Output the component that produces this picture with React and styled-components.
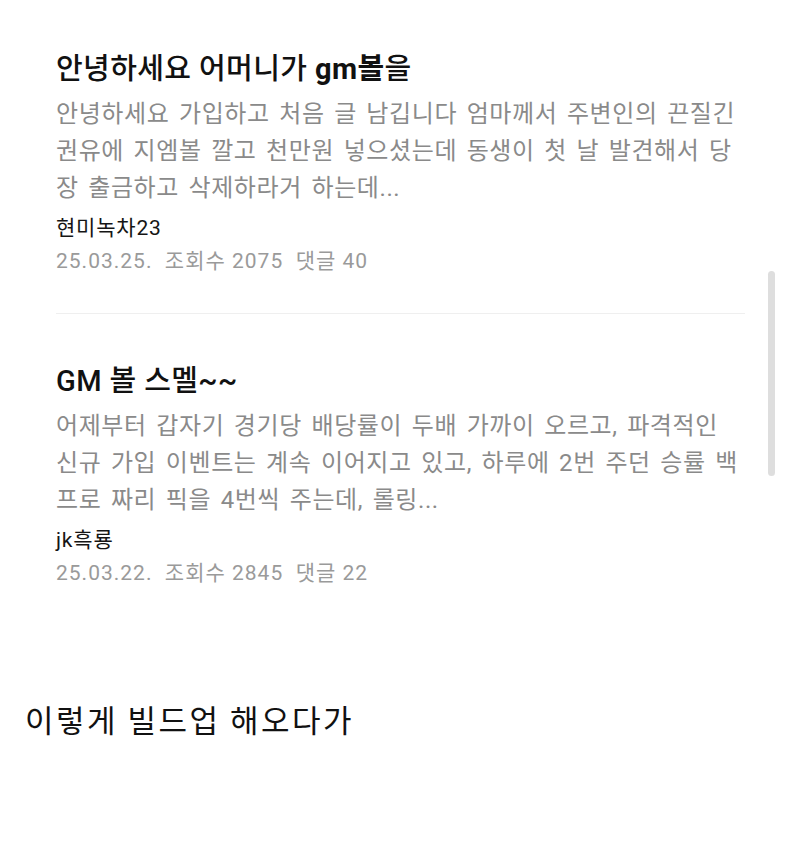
import React from "react";
import styled, { createGlobalStyle } from "styled-components";

const Global = createGlobalStyle`
  html, body { margin: 0; padding: 0; background: #ffffff; }
  body { font-family: Roboto, "Noto Sans CJK KR", sans-serif; }
`;

const Page = styled.div`
  position: relative;
  width: 800px;
  height: 844px;
  background: #fff;
  overflow: hidden;
`;

const List = styled.div`
  display: flex;
  flex-direction: column;
  padding: 0 55px 0 56px;
`;

const Post = styled.article`
  display: flex;
  flex-direction: column;
  padding: ${(p) => (p.$first ? "49px" : "47px")} 0 37px;
  border-bottom: ${(p) => (p.$divider ? "1px solid #efefef" : "none")};
`;

const Title = styled.h2`
  margin: 0 0 7px;
  font-family: Roboto, "Noto Sans CJK KR", sans-serif;
  font-size: 29px;
  line-height: 40px;
  font-weight: 500;
  color: #111;
  letter-spacing: 0.4px;
  b { font-weight: 700; }
`;

const Excerpt = styled.p`
  margin: 0;
  font-family: Roboto, "Noto Sans CJK KR", sans-serif;
  font-size: 24px;
  line-height: 37px;
  font-weight: 400;
  color: #8a8a8a;
  letter-spacing: 0.6px;
  word-spacing: 3px;
`;

const Author = styled.div`
  margin-top: 6px;
  font-size: 21px;
  line-height: 30px;
  color: #151515;
  letter-spacing: 0.8px;
`;

const Meta = styled.div`
  margin-top: 3px;
  font-size: 21px;
  line-height: 30px;
  color: #9a9a9a;
  letter-spacing: 1px;
  white-space: pre;
`;

const Caption = styled.p`
  margin: 72px 0 0 25px;
  font-family: "Noto Sans CJK KR", sans-serif;
  font-size: 31px;
  line-height: 44px;
  font-weight: 400;
  color: #111;
  letter-spacing: 2.5px;
`;

const Scrollbar = styled.div`
  position: absolute;
  left: 768px;
  top: 271px;
  width: 7px;
  height: 205px;
  border-radius: 4px;
  background: #dedede;
`;

const posts = [
  {
    title: (
      <>
        안녕하세요 어머니가 <b>gm볼</b>을
      </>
    ),
    lines: [
      "안녕하세요 가입하고 처음 글 남깁니다 엄마께서 주변인의 끈질긴",
      "권유에 지엠볼 깔고 천만원 넣으셨는데 동생이 첫 날 발견해서 당",
      "장 출금하고 삭제하라거 하는데...",
    ],
    author: "현미녹차23",
    meta: "25.03.25.  조회수 2075  댓글 40",
  },
  {
    title: "GM 볼 스멜~~",
    lines: [
      "어제부터 갑자기 경기당 배당률이 두배 가까이 오르고, 파격적인",
      "신규 가입 이벤트는 계속 이어지고 있고, 하루에 2번 주던 승률 백",
      "프로 짜리 픽을 4번씩 주는데, 롤링...",
    ],
    author: "jk흑룡",
    meta: "25.03.22.  조회수 2845  댓글 22",
  },
];

export default function App() {
  return (
    <Page>
      <Global />
      <List>
        {posts.map((p, i) => (
          <Post key={i} $first={i === 0} $divider={i === 0}>
            <Title>{p.title}</Title>
            <Excerpt>
              {p.lines.map((l, j) => (
                <React.Fragment key={j}>
                  {l}
                  {j < p.lines.length - 1 && <br />}
                </React.Fragment>
              ))}
            </Excerpt>
            <Author>{p.author}</Author>
            <Meta>{p.meta}</Meta>
          </Post>
        ))}
      </List>
      <Caption>이렇게 빌드업 해오다가</Caption>
      <Scrollbar />
    </Page>
  );
}
